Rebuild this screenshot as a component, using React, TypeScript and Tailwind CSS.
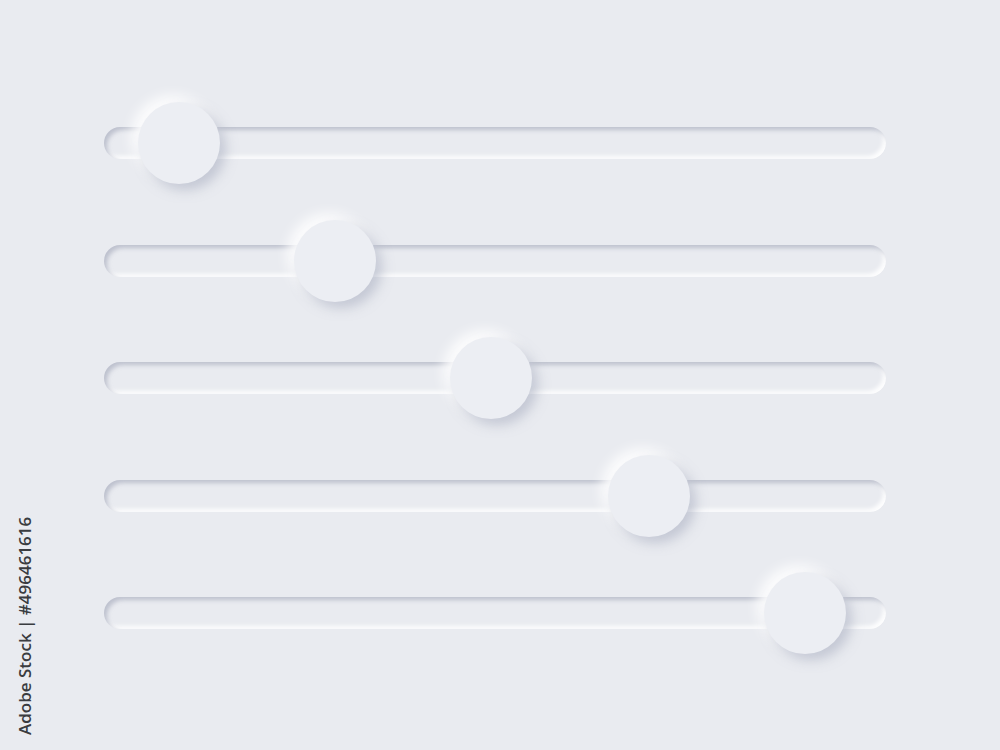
import React from 'react'

// knob centre, in px from the track's left edge
const sliders = [75, 231, 387, 545, 701]

function Slider({ at }: { at: number }) {
  return (
    <div className="relative h-[32px] w-[782px] rounded-full bg-[#e9ebf0] shadow-[inset_3px_3px_4px_rgba(160,165,184,0.6),inset_-3px_-3px_4px_rgba(255,255,255,0.95)]">
      <div
        className="absolute top-1/2 h-[82px] w-[82px] -translate-x-1/2 -translate-y-1/2 rounded-full bg-[#eceef3] shadow-[6px_6px_12px_rgba(160,166,186,0.5),-6px_-6px_14px_rgba(255,255,255,1)]"
        style={{ left: at }}
      />
    </div>
  )
}

export default function App() {
  return (
    <div className="relative h-[750px] w-[1000px] overflow-hidden bg-[#e9ebf0] font-['Open_Sans',sans-serif]">
      <div className="flex flex-col gap-[85.5px] pl-[104px] pt-[127px]">
        {sliders.map((at, i) => (
          <Slider key={i} at={at} />
        ))}
      </div>
      <div className="absolute left-[12px] top-[485px] origin-top-left translate-y-[250px] -rotate-90 whitespace-nowrap text-[17px] font-semibold text-[#3a3c40]">
        Adobe Stock | #496461616
      </div>
    </div>
  )
}
